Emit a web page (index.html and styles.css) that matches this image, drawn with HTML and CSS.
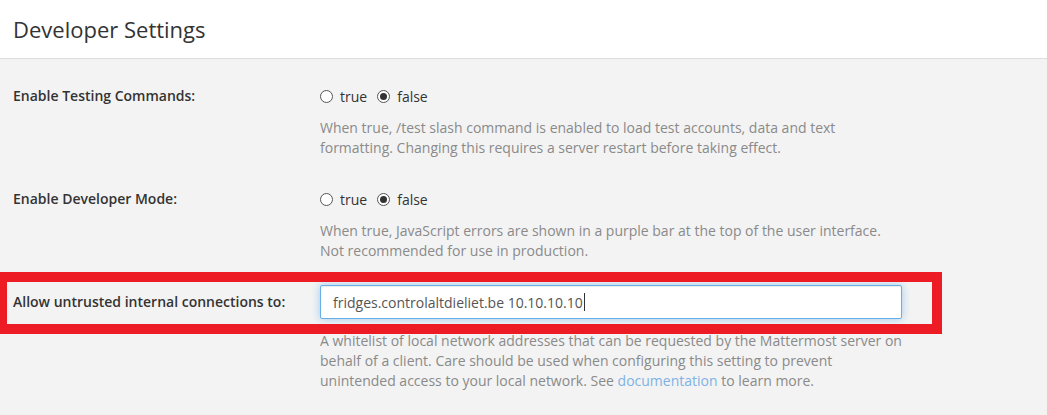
FILE: index.html
```html
<!DOCTYPE html>
<html>
<head>
<meta charset="utf-8">
<link rel="stylesheet" href="styles.css">
</head>
<body>
<div class="header"><h3 class="title">Developer Settings</h3></div>
<div class="content">
  <div class="group">
    <label class="label">Enable Testing Commands:</label>
    <div class="control">
      <div class="radios">
        <label class="radio"><span class="dot"></span>true</label>
        <label class="radio"><span class="dot on"></span>false</label>
      </div>
      <div class="help">When true, /test slash command is enabled to load test accounts, data and text formatting. Changing this requires a server restart before taking effect.</div>
    </div>
  </div>
  <div class="group">
    <label class="label">Enable Developer Mode:</label>
    <div class="control">
      <div class="radios">
        <label class="radio"><span class="dot"></span>true</label>
        <label class="radio"><span class="dot on"></span>false</label>
      </div>
      <div class="help">When true, JavaScript errors are shown in a purple bar at the top of the user interface. Not recommended for use in production.</div>
    </div>
  </div>
  <div class="group marked">
    <div class="highlight"></div>
    <label class="label">Allow untrusted internal connections to:</label>
    <div class="control">
      <div class="input">fridges.controlaltdieliet.be 10.10.10.10<span class="caret"></span></div>
      <div class="help help-input">A whitelist of local network addresses that can be requested by the Mattermost server on behalf of a client. Care should be used when configuring this setting to prevent unintended access to your local network. See <a href="#" class="link">documentation</a> to learn more.</div>
    </div>
  </div>
</div>
</body>
</html>
```
FILE: styles.css
```css
html, body {
  margin: 0;
  padding: 0;
}
body {
  background: #f3f3f3;
  font-family: "Open Sans", "Liberation Sans", sans-serif;
  font-size: 14px;
  color: #333;
  width: 1047px;
  height: 415px;
  overflow: hidden;
}
.header {
  background: #fff;
  border-bottom: 1px solid #dddddd;
  height: 58px;
  display: flex;
  align-items: center;
  padding-left: 13px;
}
.title {
  margin: 0;
  font-size: 22px;
  font-weight: 400;
  color: #333;
  line-height: 30px;
}
.content {
  padding: 20px 0 0 13px;
  display: flex;
  flex-direction: column;
  gap: 24px;
}
.group {
  display: grid;
  grid-template-columns: 307px 582px;
  position: relative;
}
.label {
  font-weight: 600;
  line-height: 34px;
  color: #333;
}
.radios {
  display: flex;
  align-items: center;
  height: 34px;
  gap: 10px;
}
.radio {
  display: flex;
  align-items: center;
  gap: 7px;
  color: #333;
}
.dot {
  width: 13px;
  height: 13px;
  box-sizing: border-box;
  border: 1px solid #555;
  border-radius: 50%;
  background: #fff;
  display: flex;
  align-items: center;
  justify-content: center;
}
.dot.on::after {
  content: "";
  width: 7px;
  height: 7px;
  border-radius: 50%;
  background: #333;
}
.help {
  margin-top: 5px;
  color: #8a8a8a;
  line-height: 20px;
}
.help-input {
  margin-top: 12px;
}
.link {
  color: #7db2e6;
  text-decoration: none;
}
.input {
  height: 34px;
  box-sizing: border-box;
  border: 1px solid #66afe9;
  border-radius: 2px;
  background: #fff;
  box-shadow: inset 0 1px 1px rgba(0,0,0,.075), 0 0 8px rgba(102,175,233,.6);
  padding: 0 12px;
  display: flex;
  align-items: center;
  color: #555;
}
.caret {
  display: inline-block;
  width: 1px;
  height: 18px;
  background: #333;
  margin-left: 1px;
}
.highlight {
  position: absolute;
  left: -16px;
  top: -13px;
  width: 945px;
  height: 62px;
  box-sizing: border-box;
  border: 10px solid #ed1c24;
  pointer-events: none;
}
```
